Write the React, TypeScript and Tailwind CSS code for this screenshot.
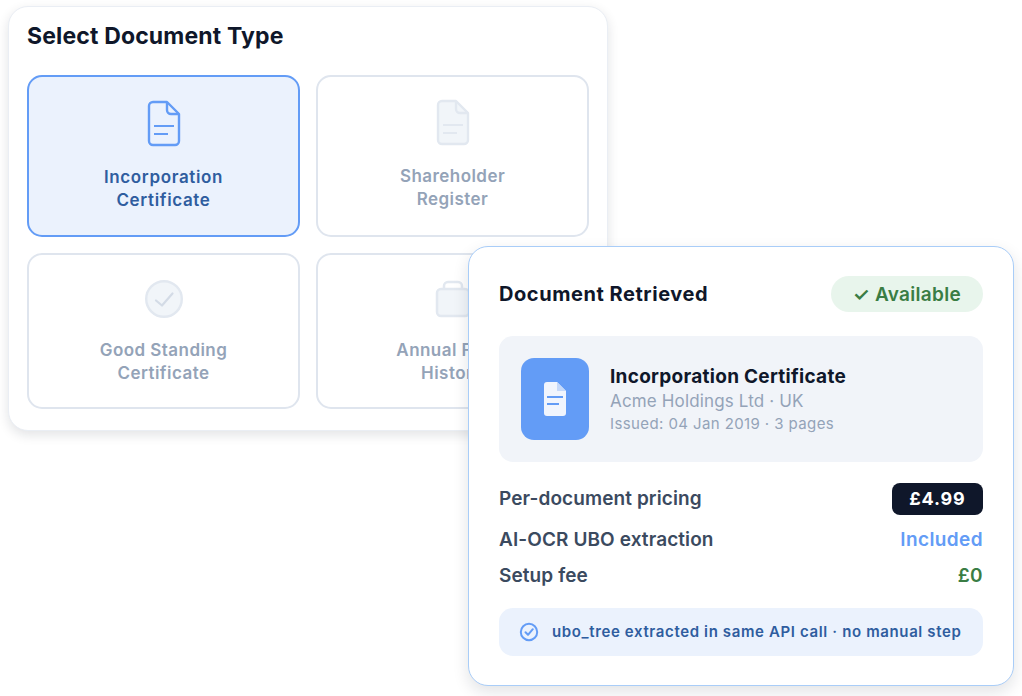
import React from "react";

const font = { fontFamily: "Inter, sans-serif" };

function DocIcon({ color, fill, line }: { color: string; fill: string; line: string }) {
  return (
    <svg width="36" height="48" viewBox="0 0 36 48" fill="none">
      <path d="M7 3H21L33 15V42a4 4 0 0 1-4 4H7a4 4 0 0 1-4-4V7a4 4 0 0 1 4-4Z" fill={fill} stroke={color} strokeWidth="2.4" strokeLinejoin="round" />
      <path d="M21 3V11a4 4 0 0 0 4 4H33" fill="none" stroke={color} strokeWidth="2.4" strokeLinejoin="round" />
      <path d="M8 27H28M8 35H22" stroke={line} strokeWidth="2.2" />
    </svg>
  );
}

function CheckIcon() {
  return (
    <svg width="40" height="40" viewBox="0 0 40 40" fill="none">
      <circle cx="20" cy="20" r="17.8" fill="#f1f5f9" stroke="#e2e8f0" strokeWidth="2.4" />
      <path d="M12 21.5L18 26.5L28.5 14.5" stroke="#d3dbe6" strokeWidth="2.2" strokeLinecap="round" strokeLinejoin="round" />
    </svg>
  );
}

function BagIcon() {
  return (
    <svg width="36" height="40" viewBox="0 0 36 40" fill="none">
      <rect x="2" y="10" width="32" height="27" rx="4" fill="#f1f5f9" stroke="#e2e8f0" strokeWidth="2.5" />
      <path d="M9 10V7a4 4 0 0 1 4-4h10a4 4 0 0 1 4 4v3" stroke="#e2e8f0" strokeWidth="2.5" />
    </svg>
  );
}

function TypeCard({ icon, l1, l2, active, cls, gap }: { icon: React.ReactNode; l1: string; l2: string; active?: boolean; cls: string; gap: string }) {
  return (
    <div className={`flex flex-col items-center rounded-[15px] ${cls} ${active ? "border-2 border-[#639cf6] bg-[#ebf2fd]" : "border-2 border-[#dfe5ee] bg-white"}`}>
      <div className="flex h-[48px] items-center justify-center">{icon}</div>
      <div className={`${gap} text-center text-[17px] leading-[23px] font-semibold ${active ? "tracking-[0.65px] text-[#2f5d9f]" : "tracking-[0.45px] text-[#94a3b8]"}`}>
        <div>{l1}</div>
        <div>{l2}</div>
      </div>
    </div>
  );
}

function Row({ label, children, cls }: { label: string; children: React.ReactNode; cls: string }) {
  return (
    <div className={`flex items-center justify-between ${cls}`}>
      <span className="text-[19px] leading-[24px] font-semibold tracking-[0.1px] text-[#3b4a5f]">{label}</span>
      {children}
    </div>
  );
}

export default function App() {
  return (
    <div className="relative h-[696px] w-[1022px] overflow-hidden bg-white pt-[6px] pl-[8px]" style={font}>
      <div className="h-[425px] w-[600px] rounded-[20px] border border-[#eaeef4] bg-white px-[18px] pt-[14px] shadow-[0_4px_12px_rgba(15,23,42,0.12)]">
        <h2 className="text-[23px] leading-[30px] font-bold tracking-[0.15px] text-[#0f172a]">Select Document Type</h2>
        <div className="mt-[24px] grid grid-cols-2 gap-x-[16px] gap-y-[16px]">
          <TypeCard active cls="h-[162px] pt-[22px]" gap="mt-[19px]" l1="Incorporation" l2="Certificate" icon={<DocIcon color="#639cf6" fill="#ebf2fd" line="#639cf6" />} />
          <TypeCard cls="h-[162px] pt-[21px]" gap="mt-[19px]" l1="Shareholder" l2="Register" icon={<DocIcon color="#e2e8f0" fill="#f1f5f9" line="#e2e8f0" />} />
          <TypeCard cls="h-[156px] pt-[20px]" gap="mt-[16px]" l1="Good Standing" l2="Certificate" icon={<CheckIcon />} />
          <TypeCard cls="h-[156px] pt-[20px]" gap="mt-[16px]" l1="Annual Filing" l2="History" icon={<BagIcon />} />
        </div>
      </div>

      <div className="absolute top-[246px] left-[468px] h-[440px] w-[546px] rounded-[20px] border border-[#a9cdf8] bg-white px-[30px] pt-[29px] shadow-[0_6px_16px_rgba(15,23,42,0.12)]">
        <div className="flex items-center justify-between">
          <h3 className="text-[20px] leading-[26px] font-bold tracking-[0.55px] text-[#0f172a]">Document Retrieved</h3>
          <span className="rounded-full bg-[#e8f5ec] px-[22px] pt-[6px] pb-[4px] text-[19px] leading-[26px] font-semibold tracking-[0.3px] text-[#3a7d44]">✓ Available</span>
        </div>

        <div className="mt-[24px] flex h-[126px] items-center gap-[21px] rounded-[14px] bg-[#f1f4f9] px-[22px]">
          <div className="flex h-[82px] w-[68px] items-center justify-center rounded-[13px] bg-[#639cf6]">
            <svg width="22" height="34" viewBox="0 0 22 34" fill="none">
              <path d="M3 0H13L22 9V31a3 3 0 0 1-3 3H3a3 3 0 0 1-3-3V3a3 3 0 0 1 3-3Z" fill="#f1f5fd" />
              <path d="M13 0V9H22Z" fill="#c5d9fa" />
              <path d="M3 15H19M3 22H15" stroke="#639cf6" strokeWidth="1.8" />
            </svg>
          </div>
          <div>
            <div className="pt-[1px] text-[19px] leading-[24px] font-bold tracking-[0.28px] text-[#0f172a]">Incorporation Certificate</div>
            <div className="text-[17px] leading-[24px] tracking-[0.15px] text-[#94a3b8]">Acme Holdings Ltd · UK</div>
            <div className="text-[15px] leading-[22px] tracking-[0.4px] text-[#94a3b8]">Issued: 04 Jan 2019 · 3 pages</div>
          </div>
        </div>

        <Row label="Per-document pricing" cls="mt-[21px]">
          <span className="rounded-[8px] bg-[#0f172a] px-[17.5px] py-[3px] text-[18px] leading-[26px] font-bold tracking-[0.8px] text-white">£4.99</span>
        </Row>
        <Row label="AI-OCR UBO extraction" cls="mt-[13px]">
          <span className="text-[19px] leading-[24px] font-semibold tracking-[0.4px] text-[#639cf6]">Included</span>
        </Row>
        <Row label="Setup fee" cls="mt-[12px]">
          <span className="text-[19px] leading-[24px] font-semibold tracking-[0.4px] text-[#3a7d44]">£0</span>
        </Row>

        <div className="mt-[20px] flex h-[48px] items-center gap-[13px] rounded-[14px] bg-[#ebf2fd] px-[20px]">
          <svg width="20" height="20" viewBox="0 0 20 20" fill="none">
            <circle cx="10" cy="10" r="8.2" stroke="#639cf6" strokeWidth="2" />
            <path d="M6.5 10.2L9 12.8L13.8 7.2" stroke="#639cf6" strokeWidth="2" strokeLinecap="round" strokeLinejoin="round" />
          </svg>
          <span className="text-[15px] leading-[20px] font-semibold tracking-[0.63px] text-[#2f5d9f]">ubo_tree extracted in same API call · no manual step</span>
        </div>
      </div>
    </div>
  );
}
